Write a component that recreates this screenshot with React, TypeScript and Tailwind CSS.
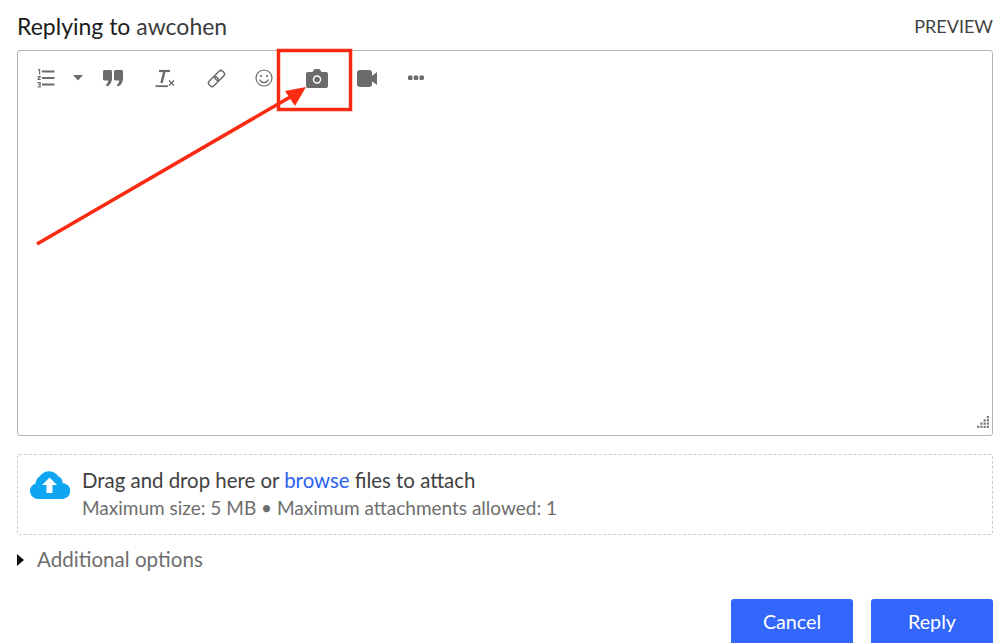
const font = "font-['Lato','Noto_Sans',sans-serif]";

function ListIcon() {
  return (
    <svg width="18" height="20" viewBox="0 0 18 20" fill="#6b6b6b">
      <rect x="5" y="2.500" width="12.500" height="2" />
      <rect x="5" y="9" width="12.500" height="2" />
      <rect x="5" y="15.500" width="12.500" height="2" />
      <path d="M1 1h2.200v5.500H2V2.200H1zM0.500 8h3.200v1.400l-1.800 1.500h1.800v1.200H0.500v-1.300l2-1.600h-2zM0.500 14h3.200v5.500H0.500v-1.100h2v-1.100h-1.200v-1h1.200v-1.100h-2z" />
    </svg>
  );
}

function CaretIcon() {
  return (
    <svg width="10" height="6" viewBox="0 0 10 6" fill="#6b6b6b">
      <path d="M0 0h10L5 5.500z" />
    </svg>
  );
}

function QuoteIcon() {
  return (
    <svg width="20" height="17" viewBox="0 0 20 17" fill="#6b6b6b">
      <path d="M1.500 0h6a1.500 1.500 0 0 1 1.500 1.500V8c0 4-2 7.500-5 8.500l-1.200-1.800c1.500-1 2.300-2.300 2.500-4.200H1.500A1.500 1.500 0 0 1 0 9V1.500A1.500 1.500 0 0 1 1.500 0z" />
      <path d="M12.500 0h6a1.500 1.500 0 0 1 1.500 1.500V8c0 4-2 7.500-5 8.500l-1.200-1.800c1.500-1 2.300-2.300 2.500-4.200h-3.800A1.500 1.500 0 0 1 11 9V1.500A1.500 1.500 0 0 1 12.500 0z" />
    </svg>
  );
}

function ClearIcon() {
  return (
    <svg width="20" height="19" viewBox="0 0 20 19" fill="none" stroke="#6b6b6b">
      <path d="M4 2h11" strokeWidth="2.200" />
      <path d="M9.500 2 6.500 14" strokeWidth="2.500" />
      <path d="M0.500 17.200h12.500" strokeWidth="1.800" />
      <path d="m14 11.500 5 5M19 11.500l-5 5" strokeWidth="1.400" />
    </svg>
  );
}

function LinkIcon() {
  return (
    <svg width="19" height="19" viewBox="0 0 19 19" fill="none" stroke="#6b6b6b" strokeWidth="1.500">
      <rect x="8.500" y="6.200" width="10.500" height="6.600" rx="2.600" transform="rotate(-45 9.500 9.500)" />
      <rect x="0" y="6.200" width="10.500" height="6.600" rx="2.600" transform="rotate(-45 9.500 9.500)" />
    </svg>
  );
}

function SmileIcon() {
  return (
    <svg width="18" height="18" viewBox="0 0 18 18" fill="none" stroke="#6b6b6b" strokeWidth="1.200">
      <circle cx="9" cy="9" r="8" />
      <circle cx="6" cy="7" r="1.100" fill="#6b6b6b" stroke="none" />
      <circle cx="12" cy="7" r="1.100" fill="#6b6b6b" stroke="none" />
      <path d="M4.500 10.500c1 2.200 2.500 3.200 4.500 3.200s3.500-1 4.500-3.200" />
    </svg>
  );
}

function CameraIcon() {
  return (
    <svg width="22" height="19" viewBox="0 0 22 19">
      <path
        fill="#6b6b6b"
        d="M6.500 3 7.700 1a2 2 0 0 1 1.600-1h3.400a2 2 0 0 1 1.600 1L15.500 3H20a2 2 0 0 1 2 2v12a2 2 0 0 1-2 2H2a2 2 0 0 1-2-2V5a2 2 0 0 1 2-2z"
      />
      <circle cx="11" cy="10.500" r="4.200" fill="#fff" />
      <circle cx="11" cy="10.500" r="2.800" fill="#6b6b6b" />
    </svg>
  );
}

function VideoIcon() {
  return (
    <svg width="20" height="17" viewBox="0 0 20 17" fill="#6b6b6b">
      <rect x="0" y="0" width="15" height="17" rx="3" />
      <path d="m14 6.500 6-4.500v13l-6-4.500z" />
    </svg>
  );
}

function MoreIcon() {
  return (
    <svg width="16" height="6" viewBox="0 0 16 6" fill="#6b6b6b">
      <rect x="0" y="0.500" width="4.500" height="4.500" rx="1.200" />
      <rect x="5.700" y="0.500" width="4.500" height="4.500" rx="1.200" />
      <rect x="11.400" y="0.500" width="4.500" height="4.500" rx="1.200" />
    </svg>
  );
}

function CloudIcon() {
  return (
    <svg width="40" height="29" viewBox="0 0 40 29" className="mb-[20px]">
      <path
        fill="#0ea5f2"
        d="M8 29a8 8 0 0 1-2.500-15.600A10 10 0 0 1 10 6 11 11 0 0 1 28.500 6.500 6.500 6.500 0 0 1 32.500 13 8 8 0 0 1 32 29z"
      />
      <path fill="#fff" d="M19.500 7.500 27 15h-4.500v8h-6v-8H12z" />
    </svg>
  );
}

function ResizeGrip() {
  return (
    <svg width="13" height="13" viewBox="0 0 12 12" fill="#777" className="absolute right-[3px] bottom-[6px]">
      <rect x="10" y="0" width="2" height="2" />
      <rect x="7" y="3" width="2" height="2" />
      <rect x="10" y="3" width="2" height="2" />
      <rect x="4" y="6" width="2" height="2" />
      <rect x="7" y="6" width="2" height="2" />
      <rect x="10" y="6" width="2" height="2" />
      <rect x="1" y="9" width="2" height="2" />
      <rect x="4" y="9" width="2" height="2" />
      <rect x="7" y="9" width="2" height="2" />
      <rect x="10" y="9" width="2" height="2" />
    </svg>
  );
}

function Annotation() {
  return (
    <svg width="998" height="643" viewBox="0 0 998 643" fill="none" className="absolute inset-0 pointer-events-none">
      <rect x="278.500" y="50.500" width="72" height="59" stroke="#fb2a12" strokeWidth="3.500" />
      <path d="M37 244 292 96" stroke="#fb2a12" strokeWidth="3.500" />
      <path d="M306 87 285 91 295 106z" fill="#fb2a12" />
    </svg>
  );
}

const tools = [
  { width: "w-[32px]", icon: <ListIcon /> },
  { width: "w-[32px]", icon: <CaretIcon /> },
  { width: "w-[38px]", icon: <QuoteIcon /> },
  { width: "w-[66px]", icon: <ClearIcon /> },
  { width: "w-[36px]", icon: <LinkIcon /> },
  { width: "w-[60px]", icon: <SmileIcon /> },
  { width: "w-[46px]", icon: <CameraIcon /> },
  { width: "w-[54px]", icon: <VideoIcon /> },
  { width: "w-[44px]", icon: <MoreIcon /> },
];

export default function App() {
  return (
    <div className={`relative h-[643px] w-[998px] overflow-hidden bg-white pr-[5px] pl-[17px] pt-[12px] ${font}`}>
      {/* Header */}
      <div className="flex h-[28px] items-center justify-between">
        <h2 className="text-[23px] font-normal">
          <span className="text-[#1c1c1c]">Replying to</span> <span className="text-[#3c3c3c]">awcohen</span>
        </h2>
        <span className="mt-[1px] text-[18px] text-[#3f3f3f]">PREVIEW</span>
      </div>

      {/* Editor */}
      <div className="relative mt-[10px] h-[386px] rounded-[3px] border border-[#b5b5b5]">
        <div className="flex h-[54px] items-center pl-[12px]">
          {tools.map((tool, index) => (
            <div key={index} className={`flex items-center justify-center ${tool.width}`}>
              {tool.icon}
            </div>
          ))}
        </div>
        <ResizeGrip />
      </div>

      {/* Attachments */}
      <div className="mt-[18px] flex h-[81px] items-center rounded-[2px] border border-dashed border-[#cccccc] pl-[12px]">
        <CloudIcon />
        <div className="ml-[12px] -mt-[2px]">
          <p className="text-[20.400px] leading-[26px] text-[#3f3f3f]">
            Drag and drop here or <span className="text-[#2a63f5]">browse</span> files to attach
          </p>
          <p className="mt-[2px] text-[19px] leading-[25px] text-[#6e6e6e]">
            Maximum size: 5 MB • Maximum attachments allowed: 1
          </p>
        </div>
      </div>

      {/* Additional options */}
      <div className="mt-[11px] flex h-[27px] items-center">
        <svg width="7" height="12" viewBox="0 0 7 12" fill="#111">
          <path d="M0 0 7 6 0 12z" />
        </svg>
        <span className="ml-[13px] text-[20.600px] text-[#6e6e6e]">Additional options</span>
      </div>

      {/* Actions */}
      <div className="mt-[26px] flex justify-end gap-[18px]">
        <button className="h-[60px] w-[122px] rounded-[3px] bg-[#3367fb] pb-[14px] text-[19.700px] text-white">Cancel</button>
        <button className="h-[60px] w-[122px] rounded-[3px] bg-[#3367fb] pb-[14px] text-[19.700px] text-white">Reply</button>
      </div>

      <Annotation />
    </div>
  );
}
